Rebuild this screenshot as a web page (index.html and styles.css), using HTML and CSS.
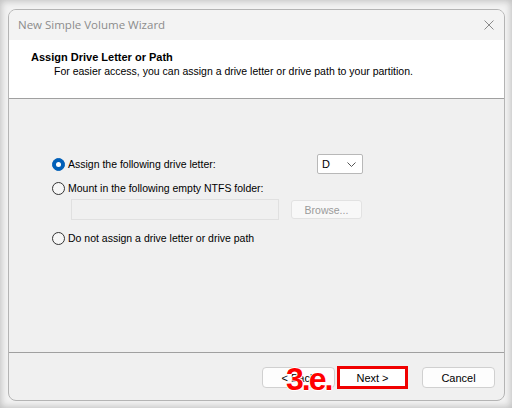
FILE: index.html
```html
<!DOCTYPE html>
<html>
<head>
<meta charset="utf-8">
<link rel="stylesheet" href="styles.css">
</head>
<body>
<div class="frame">
  <div class="window">
    <div class="titlebar">
      <span class="title">New Simple Volume Wizard</span>
      <svg class="close" width="10" height="10" viewBox="0 0 10 10"><path d="M0.5 0.5L9.5 9.5M9.5 0.5L0.5 9.5" stroke="#8a8a8a" stroke-width="1" fill="none"/></svg>
    </div>
    <div class="header">
      <div class="h-title">Assign Drive Letter or Path</div>
      <div class="h-sub">For easier access, you can assign a drive letter or drive path to your partition.</div>
    </div>
    <div class="content">
      <div class="row row1">
        <span class="radio checked"></span>
        <span class="label l1">Assign the following drive letter:</span>
        <div class="select"><span>D</span><svg width="9" height="5" viewBox="0 0 9 5"><path d="M0.5 0.5L4.5 4.5L8.5 0.5" stroke="#555" fill="none"/></svg></div>
      </div>
      <div class="row row2">
        <span class="radio"></span>
        <span class="label">Mount in the following empty NTFS folder:</span>
      </div>
      <div class="row pathrow">
        <div class="textbox"></div>
        <div class="browse">Browse...</div>
      </div>
      <div class="row row3">
        <span class="radio"></span>
        <span class="label">Do not assign a drive letter or drive path</span>
      </div>
    </div>
    <div class="footer">
      <div class="btn back">&lt; Back</div>
      <div class="btn next">Next &gt;</div>
      <div class="btn cancel">Cancel</div>
      <span class="step">3.e.</span>
    </div>
  </div>
</div>
</body>
</html>
```
FILE: styles.css
```css
html, body {
  margin: 0;
  padding: 0;
}
body {
  width: 512px;
  height: 408px;
  background: #f2f2f2;
  box-shadow: inset 0 0 7px 1px rgba(0,0,0,0.22);
  overflow: hidden;
  font-family: "Liberation Sans", Arial, sans-serif;
  font-size: 10.5px;
  color: #000;
}
.frame {
  padding: 9px 0 0 8px;
}
.window {
  position: relative;
  width: 495px;
  height: 390px;
  border: 1px solid #b4b4b4;
  border-radius: 8px;
  background: #f0f0f0;
  overflow: hidden;
  display: flex;
  flex-direction: column;
}
.titlebar {
  height: 30px;
  background: #f3f3f3;
  display: flex;
  align-items: center;
  justify-content: space-between;
  padding: 0 10px 0 9px;
}
.title {
  font-family: "Open Sans", "Noto Sans", sans-serif;
  font-size: 11.5px;
  color: #8c8c8c;
  margin-top: -1px;
}
.close {
  margin-top: -1px;
}
.header {
  height: 59px;
  background: #fff;
  border-bottom: 1px solid #a0a0a0;
  padding: 10px 0 0 22px;
  box-sizing: border-box;
}
.h-title {
  font-weight: bold;
  font-size: 11px;
  line-height: 14px;
}
.h-sub {
  padding-left: 23px;
  line-height: 14px;
}
.content {
  height: 254px;
  border-bottom: 1px solid #a0a0a0;
  box-sizing: border-box;
  padding: 54px 0 0 43px;
}
.row {
  display: flex;
  align-items: center;
}
.radio {
  width: 11px;
  height: 11px;
  border: 1px solid #333;
  border-radius: 50%;
  background: #f6f6f6;
  flex: none;
  position: relative;
}
.radio.checked {
  background: #005fb8;
  border-color: #005fb8;
}
.radio.checked::after {
  content: "";
  position: absolute;
  left: 3px;
  top: 3px;
  width: 5px;
  height: 5px;
  border-radius: 50%;
  background: #fff;
}
.label {
  margin-left: 3px;
  line-height: 13px;
}
.l1 {
  width: 249px;
}
.row1 {
  height: 20px;
  margin-top: 1px;
}
.select {
  height: 18px;
  border: 1px solid #b8b8b8;
  border-radius: 2px;
  background: #fff;
  display: flex;
  align-items: center;
  justify-content: space-between;
  padding: 0 6px 0 4px;
  width: 34px;
  font-size: 11px;
}
.row2 {
  margin-top: 8px;
  height: 13px;
}
.pathrow {
  margin-top: 4px;
  padding-left: 19px;
  align-items: flex-start;
}
.textbox {
  width: 206px;
  height: 19px;
  border: 1px solid #e0e0e0;
  background: #f0f0f0;
}
.browse {
  margin-left: 12px;
  margin-top: 1px;
  width: 69px;
  height: 17px;
  border: 1px solid #e2e2e2;
  border-radius: 3px;
  background: #f8f8f8;
  color: #9a9a9a;
  display: flex;
  align-items: center;
  justify-content: center;
}
.row3 {
  margin-top: 12px;
  height: 13px;
}
.footer {
  flex: 1;
  position: relative;
  display: flex;
  align-items: flex-start;
  padding: 14px 0 0 253px;
}
.btn {
  width: 71px;
  height: 19px;
  border: 1px solid #d0d0d0;
  border-radius: 4px;
  background: #fdfdfd;
  display: flex;
  align-items: center;
  justify-content: center;
  font-size: 11px;
}
.next {
  width: 65px;
  height: 17px;
  margin-left: 2px;
  margin-top: -1px;
  border: 3px solid #f00000;
  border-radius: 0;
  background: #fff;
}
.cancel {
  margin-left: 14px;
}
.step {
  position: absolute;
  left: 277px;
  top: 10px;
  font-family: "Liberation Sans", Arial, sans-serif;
  font-weight: bold;
  font-size: 32px;
  line-height: 32px;
  letter-spacing: -2px;
  color: #ff0000;
  text-shadow: 1px 0 0 #fff, -1px 0 0 #fff, 0 1px 0 #fff, 0 -1px 0 #fff;
}
```
